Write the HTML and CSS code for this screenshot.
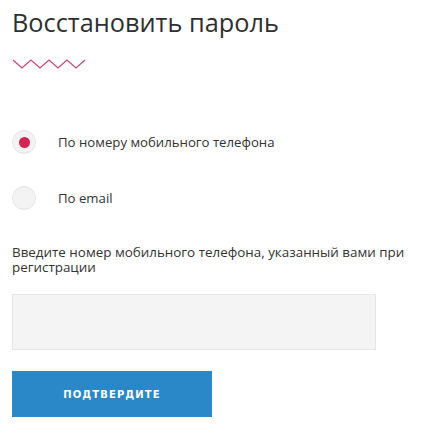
FILE: index.html
```html
<!DOCTYPE html>
<html>
<head>
<meta name='viewport' content='width=device-width,initial-scale=1.0'/>
<title>Восстановить пароль</title>
<link rel="stylesheet" href="styles.css">
</head>
<body>

<section class="main">

    <h1 class="title">Восстановить пароль</h1>

    <svg class="zigzag" width="74" height="12" viewBox="0 0 74 12">
        <polyline points="1,1 10,9 19,1 28,9 37,1 46,9 55,1 64,9 73,1" fill="none" stroke="#c8496f" stroke-width="1.3"/>
    </svg>

    <div class="options">
        <label class="radio-row">
            <input type="radio" name="method" checked>
            <span class="radio"></span>
            <span class="radio-label">По номеру мобильного телефона</span>
        </label>
        <label class="radio-row">
            <input type="radio" name="method">
            <span class="radio"></span>
            <span class="radio-label">По email</span>
        </label>
    </div>

    <p class="hint">Введите номер мобильного телефона, указанный вами при регистрации</p>

    <input class="field" type="text">

    <button class="submit">ПОДТВЕРДИТЕ</button>

</section>

</body>
</html>
```

FILE: styles.css
```css
body {
    margin: 0;
    font-family: "Open Sans", Arial, sans-serif;
    background: #fff;
    color: #333;
}

.main {
    display: flex;
    flex-direction: column;
    align-items: flex-start;
    padding: 0 12px;
}

.title {
    margin: 5px 0 0 0;
    font-size: 25.3px;
    font-weight: 400;
    line-height: 34px;
    color: #2f2f2f;
}

.zigzag {
    display: block;
    margin-top: 20px;
}

.options {
    display: flex;
    flex-direction: column;
    gap: 32px;
    margin-top: 59px;
}

.radio-row {
    display: flex;
    align-items: center;
    cursor: pointer;
}

.radio-row input {
    display: none;
}

.radio {
    position: relative;
    width: 22px;
    height: 22px;
    border-radius: 50%;
    background: #f3f3f3;
    border: 1px solid #e6e6e6;
    flex-shrink: 0;
}

input:checked + .radio:before {
    position: absolute;
    content: "";
    left: 6px;
    top: 6px;
    width: 11px;
    height: 11px;
    border-radius: 50%;
    background: #d42452;
}

.radio-label {
    margin-left: 22px;
    font-size: 13.2px;
    color: #333;
}

.hint {
    max-width: 400px;
    margin: 35px 0 0 0;
    font-size: 13.4px;
    line-height: 15px;
    color: #333;
}

.field {
    box-sizing: border-box;
    width: 364px;
    height: 56px;
    margin-top: 19px;
    background: #f4f4f4;
    border: 1px solid #e6e6e6;
    outline: 0;
}

.submit {
    margin-top: 21px;
    width: 200px;
    height: 46px;
    border: 0;
    background: #2a88c8;
    color: #fff;
    font-family: "DejaVu Sans", Verdana, sans-serif;
    font-size: 10px;
    font-weight: bold;
    letter-spacing: 1.1px;
    cursor: pointer;
}
```
